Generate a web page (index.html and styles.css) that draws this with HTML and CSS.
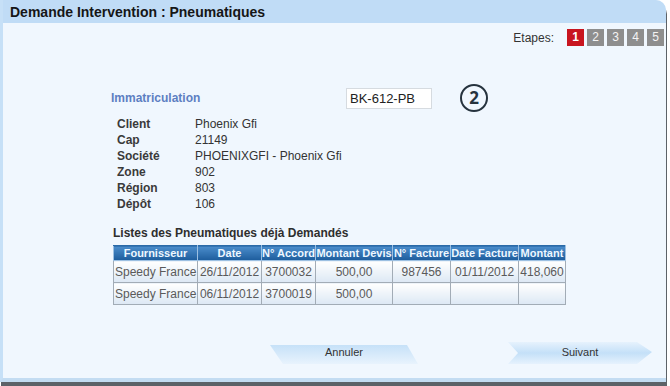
FILE: index.html
```html
<html>
<head>
    <link rel="stylesheet" href="styles.css">
</head>
<body>
<div class="window">
    <div class="titlebar">Demande Intervention : Pneumatiques</div>

    <div class="steps">
        <span class="steps_label">Etapes:</span>
        <span class="step current">1</span>
        <span class="step">2</span>
        <span class="step">3</span>
        <span class="step">4</span>
        <span class="step">5</span>
    </div>

    <div class="immat">
        <span class="immat_label">Immatriculation</span>
        <input type="text" class="immat_input" value="BK-612-PB">
        <span class="circle_num">2</span>
    </div>

    <div class="info">
        <span class="info_label">Client</span><span>Phoenix Gfi</span>
        <span class="info_label">Cap</span><span>21149</span>
        <span class="info_label">Société</span><span>PHOENIXGFI - Phoenix Gfi</span>
        <span class="info_label">Zone</span><span>902</span>
        <span class="info_label">Région</span><span>803</span>
        <span class="info_label">Dépôt</span><span>106</span>
    </div>

    <div class="list_title">Listes des Pneumatiques déjà Demandés</div>
    <table class="pneus">
        <colgroup>
            <col style="width:84px"><col style="width:64px"><col style="width:54px"><col style="width:77px">
            <col style="width:58px"><col style="width:68px"><col style="width:47px">
        </colgroup>
        <tr>
            <th>Fournisseur</th><th>Date</th><th>N° Accord</th><th>Montant Devis</th>
            <th>N° Facture</th><th>Date Facture</th><th>Montant</th>
        </tr>
        <tr>
            <td class="left">Speedy France</td><td>26/11/2012</td><td>3700032</td><td>500,00</td>
            <td>987456</td><td>01/11/2012</td><td>418,060</td>
        </tr>
        <tr>
            <td class="left">Speedy France</td><td>06/11/2012</td><td>3700019</td><td>500,00</td>
            <td></td><td></td><td></td>
        </tr>
    </table>

    <div class="buttons">
        <div class="btn btn_cancel">Annuler</div>
        <div class="btn btn_next">Suivant</div>
    </div>
</div>
</body>
</html>
```

FILE: styles.css
```css
body {
    margin: 0;
    background: #ffffff;
    font-family: "Liberation Sans", Arial, sans-serif;
    font-size: 12px;
    color: #333333;
}
.window {
    width: 663px;
    height: 378px;
    background: #f0f7fe;
    border-left: 3px solid #c6e0f7;
    border-bottom: 4px solid #c3dcf2;
    border-top-right-radius: 10px;
    box-shadow: 1px 4px 0 #5c6268;
    overflow: hidden;
}
.titlebar {
    height: 23px;
    line-height: 24px;
    padding-left: 7px;
    background: #c0dcf6;
    font-size: 14px;
    font-weight: bold;
    color: #161616;
}
.steps {
    display: flex;
    justify-content: flex-end;
    align-items: center;
    gap: 3px;
    margin-top: 6px;
    padding-right: 2px;
}
.steps_label {
    margin-right: 10px;
    color: #333333;
}
.step {
    width: 17px;
    height: 17px;
    line-height: 17px;
    text-align: center;
    background: #8e8e8e;
    color: #f4f4f4;
    font-size: 12px;
}
.step.current {
    background: #c8151f;
    font-weight: bold;
    color: #ffffff;
}
.immat {
    display: flex;
    align-items: center;
    margin-top: 38px;
    padding-left: 108px;
    height: 28px;
}
.immat_label {
    width: 235px;
    font-weight: bold;
    color: #5d7fc2;
}
.immat_input {
    width: 86px;
    height: 21px;
    box-sizing: border-box;
    border: 1px solid #d6dbe0;
    background: #ffffff;
    padding: 0 3px;
    font-family: "Liberation Sans", Arial, sans-serif;
    font-size: 13px;
    color: #222222;
}
.circle_num {
    margin-left: 28px;
    width: 24px;
    height: 24px;
    border: 2.5px solid #26333e;
    border-radius: 50%;
    text-align: center;
    line-height: 24px;
    font-family: "Open Sans", "DejaVu Sans", sans-serif;
    font-weight: bold;
    font-size: 17px;
    color: #26333e;
}
.info {
    display: grid;
    grid-template-columns: 78px auto;
    margin-top: 4px;
    padding-left: 114px;
    line-height: 16px;
}
.info_label {
    font-weight: bold;
    color: #3a3a3a;
}
.list_title {
    margin-top: 13px;
    padding-left: 110px;
    line-height: 16px;
    font-weight: bold;
    color: #2e2e2e;
}
.pneus {
    margin-top: 4px;
    margin-left: 110px;
    border-collapse: collapse;
    table-layout: fixed;
    width: 452px;
    font-family: "Liberation Sans", Arial, sans-serif;
    font-size: 12px;
}
.pneus th {
    height: 15px;
    padding: 0;
    background: linear-gradient(#4b8dcc, #1d5c9c);
    border: 1px solid #9cc0e2;
    border-top-color: #2a6aa8;
    font-size: 11px;
    font-weight: bold;
    color: #eef7ff;
    text-align: center;
    white-space: nowrap;
    overflow: hidden;
}
.pneus td {
    height: 22px;
    padding: 0;
    background: linear-gradient(#ffffff, #dce8f4);
    border: 1px solid #a2acb6;
    font-size: 12px;
    color: #5a5a5a;
    text-align: center;
    white-space: nowrap;
    overflow: hidden;
}
.pneus td.left {
    text-align: left;
    padding-left: 1px;
}
.buttons {
    display: flex;
    align-items: center;
    margin-top: 37px;
    padding-left: 267px;
    gap: 90px;
    height: 22px;
}
.btn {
    font-size: 11px;
    color: #333333;
    text-align: center;
}
.btn_cancel {
    width: 148px;
    height: 19px;
    margin-top: 3px;
    line-height: 15px;
    background: linear-gradient(#c6e1f8, #e8f3fd);
    clip-path: polygon(0 0, 137px 0, 148px 19px, 13px 19px);
}
.btn_next {
    width: 144px;
    height: 22px;
    line-height: 21px;
    background: linear-gradient(#e6f2fd, #c4e0f8 50%, #e6f2fd);
    clip-path: polygon(0 0, 129px 0, 144px 10px, 129px 22px, 0 22px, 10px 11px);
}
```
